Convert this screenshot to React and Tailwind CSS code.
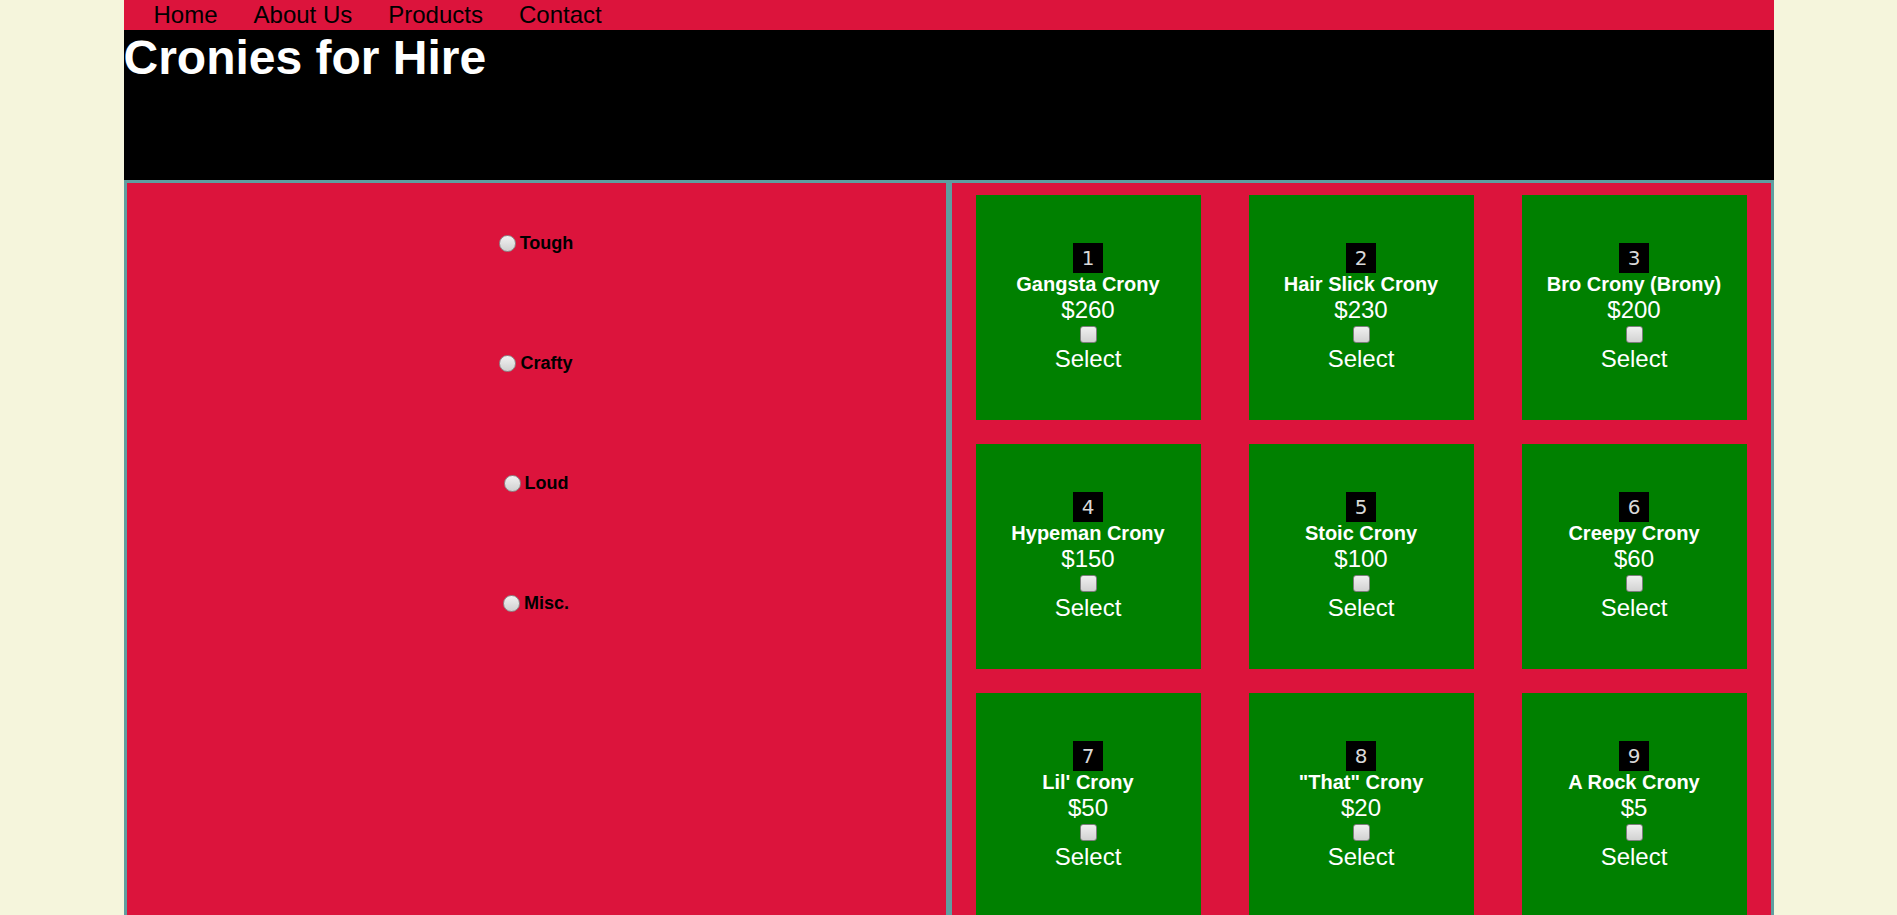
import React from "react";

const links = ["Home", "About Us", "Products", "Contact"];
const traits = ["Tough", "Crafty", "Loud", "Misc."];

const cronies = [
  { id: 1, name: "Gangsta Crony", price: 260 },
  { id: 2, name: "Hair Slick Crony", price: 230 },
  { id: 3, name: "Bro Crony (Brony)", price: 200 },
  { id: 4, name: "Hypeman Crony", price: 150 },
  { id: 5, name: "Stoic Crony", price: 100 },
  { id: 6, name: "Creepy Crony", price: 60 },
  { id: 7, name: "Lil' Crony", price: 50 },
  { id: 8, name: '"That" Crony', price: 20 },
  { id: 9, name: "A Rock Crony", price: 5 },
];

function CronyCard({ crony }) {
  return (
    <div className="w-[225px] h-[225px] mx-[24px] my-[12px] bg-[#008000] flex flex-col items-center justify-center text-white">
      <div className="w-[30px] h-[30px] bg-black text-[#d9d9d9] text-[20px] leading-[30px] text-center font-['DejaVu_Sans',sans-serif]">
        {crony.id}
      </div>
      <h3 className="text-[20px] font-bold leading-[23px]">{crony.name}</h3>
      <p className="text-[24px] leading-[27.6px]">${crony.price}</p>
      <input
        type="checkbox"
        className="appearance-none shrink-0 w-[17px] h-[17px] my-[2px] rounded-[3px] border border-[#7d7d7d] bg-gradient-to-b from-[#f0f0f0] to-[#d2d2d2]"
      />
      <span className="text-[24px] leading-[27.6px]">Select</span>
    </div>
  );
}

export default function App() {
  return (
    <div className="min-h-screen bg-[#f5f5dc] font-['Liberation_Sans',Arial,sans-serif]">
      <div className="w-[1650px] mx-auto">
        <nav className="h-[30px] bg-[#dc143c]">
          <ul className="flex pl-[30px] gap-[36px] text-[24px] leading-[30px] text-black">
            {links.map((link) => (
              <li key={link}>
                <a href="#">{link}</a>
              </li>
            ))}
          </ul>
        </nav>

        <header className="h-[150px] bg-black">
          <h1 className="text-[48px] leading-[1.15] font-bold text-white">Cronies for Hire</h1>
        </header>

        <main className="flex">
          <section className="w-1/2 bg-[#dc143c] border-[3px] border-[#5f9ea0] flex flex-col">
            {traits.map((trait) => (
              <label
                key={trait}
                className="h-[120px] flex items-center justify-center text-[18px] font-bold text-black"
              >
                <input
                  type="radio"
                  name="trait"
                  className="appearance-none shrink-0 w-[17px] h-[17px] mr-[4px] rounded-full border border-[#8c8c8c] bg-gradient-to-b from-[#f2f2f2] to-[#d0d0d0]"
                />
                {trait}
              </label>
            ))}
          </section>

          <section className="w-1/2 bg-[#dc143c] border-[3px] border-[#5f9ea0] flex flex-wrap">
            {cronies.map((crony) => (
              <CronyCard key={crony.id} crony={crony} />
            ))}
          </section>
        </main>
      </div>
    </div>
  );
}
